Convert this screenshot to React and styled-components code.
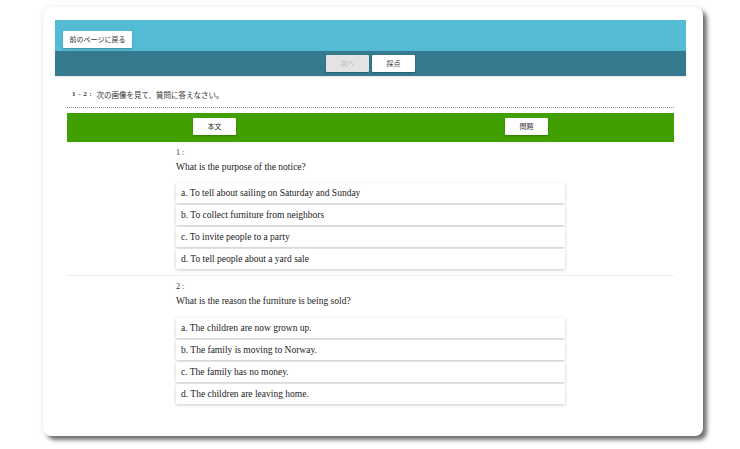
import React from "react";
import styled, { createGlobalStyle } from "styled-components";

const GlobalStyle = createGlobalStyle`
  html, body {
    margin: 0;
    padding: 0;
    background: #ffffff;
  }
  body {
    font-family: "Liberation Sans", "Noto Sans CJK JP", sans-serif;
    color: #333333;
  }
`;

const Page = styled.div`
  width: 740px;
  height: 449px;
  padding: 7px 0 0 43px;
  box-sizing: border-box;
`;

const Card = styled.div`
  width: 660px;
  height: 429px;
  box-sizing: border-box;
  padding: 13px 17px 0 12px;
  background: #ffffff;
  border-radius: 8px;
  box-shadow: 4px 4px 4px rgba(0, 0, 0, 0.55), 0 0 6px rgba(0, 0, 0, 0.08);
`;

const TopBar = styled.div`
  height: 31px;
  background: #54bbd4;
  box-sizing: border-box;
  padding: 8px 0 0 8px;
`;

const NavBar = styled.div`
  height: 25px;
  background: #357a8e;
  display: flex;
  justify-content: center;
  align-items: flex-start;
  gap: 3px;
  padding-top: 4px;
  box-sizing: border-box;
  box-shadow: 0 1px 2px rgba(0, 0, 0, 0.12);
`;

const Button = styled.button`
  width: ${(p) => p.$w || 43}px;
  height: 17px;
  padding: 0;
  border: none;
  border-radius: 1px;
  background: ${(p) => (p.$disabled ? "#e3e3e3" : "#ffffff")};
  color: ${(p) => (p.$disabled ? "#b5b5b5" : "#333333")};
  font-family: "Liberation Sans", "Noto Sans CJK JP", sans-serif;
  font-size: 7px;
  line-height: 17px;
  box-shadow: 0 1px 2px rgba(0, 0, 0, 0.25);
  cursor: pointer;
`;

const Instruction = styled.div`
  height: 31px;
  padding-left: 17px;
  box-sizing: border-box;
  display: flex;
  align-items: center;
  padding-top: 5px;
  font-size: 7.5px;
  color: #333333;
  gap: 4px;
`;

const Num = styled.span`
  font-family: "Liberation Serif", serif;
  font-weight: bold;
  font-size: 7px;
  letter-spacing: 0.5px;
`;

const Content = styled.div`
  margin: 0 12px;
`;

const Dotted = styled.div`
  border-top: 1px dotted #888888;
`;

const TabBar = styled.div`
  margin-top: 5px;
  height: 29px;
  background: #40a000;
  display: grid;
  grid-template-columns: 1fr 1fr;
  column-gap: 17px;
  justify-items: center;
  align-items: start;
  padding-top: 5px;
  box-sizing: border-box;
`;

const Question = styled.div`
  padding: 6px 0 6px;
  border-bottom: ${(p) => (p.$last ? "none" : "1px solid #eeeeee")};
`;

const QInner = styled.div`
  width: 389px;
  margin: 0 auto;
`;

const QLabel = styled.div`
  font-family: "Liberation Serif", serif;
  font-size: 8px;
  line-height: 10px;
  color: #333333;
`;

const QText = styled.div`
  margin-top: 2px;
  font-family: "Liberation Serif", serif;
  font-size: 9.5px;
  line-height: 14px;
  color: #222222;
`;

const Options = styled.div`
  margin-top: ${(p) => p.$mt}px;
  display: flex;
  flex-direction: column;
  gap: 2px;
`;

const Option = styled.div`
  height: 20px;
  line-height: 20px;
  padding-left: 5px;
  background: #ffffff;
  box-shadow: 0 1px 3px rgba(0, 0, 0, 0.22);
  font-family: "Liberation Serif", serif;
  font-size: 9.5px;
  color: #222222;
`;

const questions = [
  {
    n: "1 :",
    text: "What is the purpose of the notice?",
    mt: 9,
    options: [
      "a. To tell about sailing on Saturday and Sunday",
      "b. To collect furniture from neighbors",
      "c. To invite people to a party",
      "d. To tell people about a yard sale",
    ],
  },
  {
    n: "2 :",
    text: "What is the reason the furniture is being sold?",
    mt: 10,
    options: [
      "a. The children are now grown up.",
      "b. The family is moving to Norway.",
      "c. The family has no money.",
      "d. The children are leaving home.",
    ],
  },
];

export default function App() {
  return (
    <Page>
      <GlobalStyle />
      <Card>
        <TopBar>
          <Button $w={69}>前のページに戻る</Button>
        </TopBar>
        <NavBar>
          <Button $disabled>次へ</Button>
          <Button>採点</Button>
        </NavBar>
        <Instruction>
          <Num>1 - 2 :</Num>
          <span>次の画像を見て、質問に答えなさい。</span>
        </Instruction>
        <Content>
          <Dotted />
          <TabBar>
            <Button>本文</Button>
            <Button>問題</Button>
          </TabBar>
          {questions.map((q, i) => (
            <Question key={q.n} $last={i === questions.length - 1}>
              <QInner>
                <QLabel>{q.n}</QLabel>
                <QText>{q.text}</QText>
                <Options $mt={q.mt}>
                  {q.options.map((o) => (
                    <Option key={o}>{o}</Option>
                  ))}
                </Options>
              </QInner>
            </Question>
          ))}
        </Content>
      </Card>
    </Page>
  );
}
